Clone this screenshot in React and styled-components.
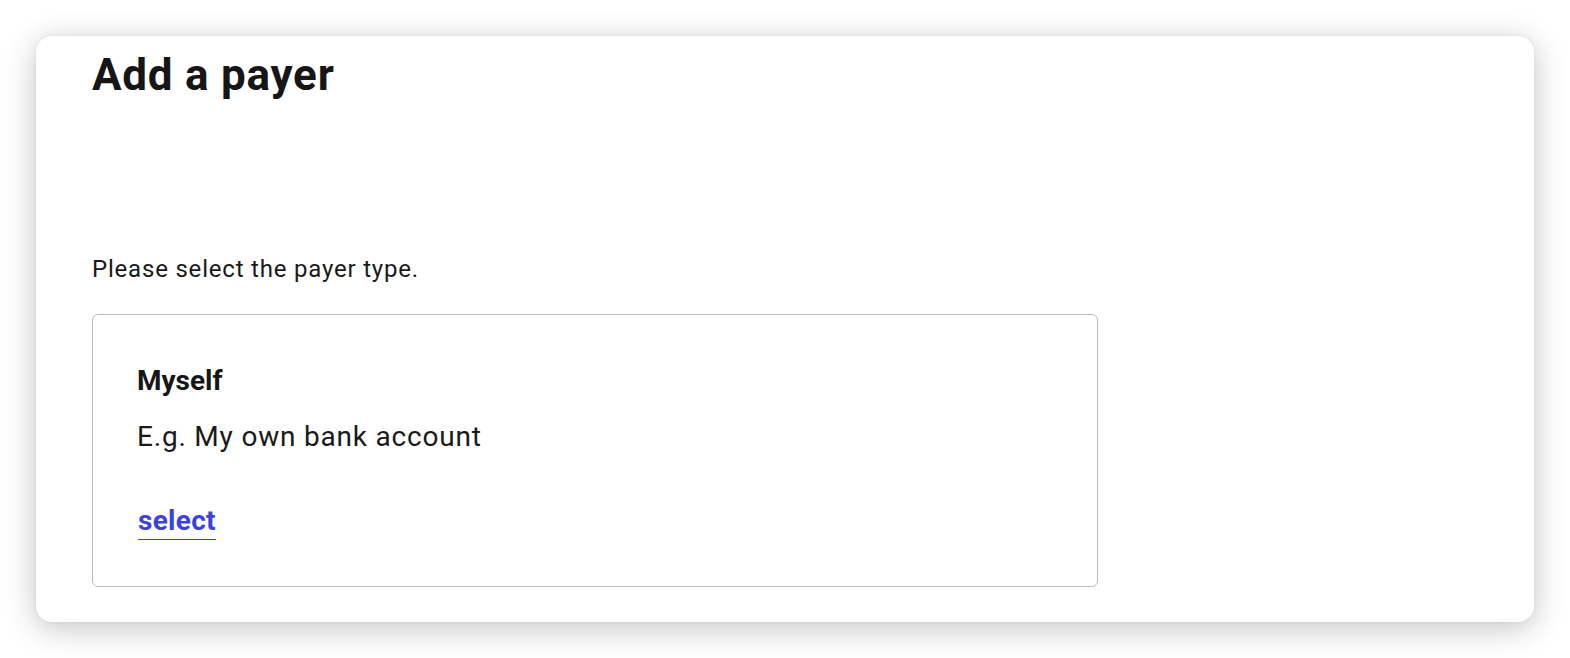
import styled, { createGlobalStyle } from "styled-components";

const GlobalStyle = createGlobalStyle`
  html, body {
    margin: 0;
    padding: 0;
    background: #ffffff;
  }
  body {
    font-family: Roboto, "Liberation Sans", sans-serif;
    color: #1a1a1a;
  }
`;

const Stage = styled.div`
  width: 1570px;
  height: 658px;
  padding: 36px 36px 36px 36px;
  box-sizing: border-box;
  background: #ffffff;
`;

const Window = styled.div`
  height: 100%;
  background: #ffffff;
  border-radius: 16px;
  box-shadow: 0 6px 32px rgba(0, 0, 0, 0.24), 0 0 4px rgba(0, 0, 0, 0.05);
  padding: 0 56px;
  box-sizing: border-box;
  overflow: hidden;
`;

const Title = styled.h1`
  margin: 13px 0 0;
  font-size: 44px;
  font-weight: 700;
  line-height: 52px;
  letter-spacing: 0.75px;
  color: #161616;
`;

const Lead = styled.p`
  margin: 154px 0 0;
  font-size: 24px;
  line-height: 28px;
  letter-spacing: 0.8px;
  color: #1a1a1a;
`;

const OptionCard = styled.div`
  width: 1006px;
  height: 273px;
  box-sizing: border-box;
  margin-top: 31px;
  border: 1px solid #bdbdbd;
  border-radius: 6px;
  padding: 50px 44px 0;
`;

const OptionName = styled.div`
  font-size: 28px;
  font-weight: 700;
  line-height: 32px;
  color: #161616;
`;

const OptionHint = styled.div`
  margin-top: 24px;
  font-size: 28px;
  line-height: 32px;
  letter-spacing: 0.8px;
  color: #1a1a1a;
`;

const LinkRow = styled.div`
  margin-top: 49px;
  padding-left: 1px;
`;

const SelectLink = styled.a`
  display: inline-block;
  font-size: 28px;
  font-weight: 700;
  line-height: 37px;
  letter-spacing: 0.3px;
  color: #3a43df;
  text-decoration: none;
  border-bottom: 1px solid #3a43df;
  cursor: pointer;
`;

export default function App() {
  return (
    <>
      <GlobalStyle />
      <Stage>
        <Window>
          <Title>Add a payer</Title>
          <Lead>Please select the payer type.</Lead>
          <OptionCard>
            <OptionName>Myself</OptionName>
            <OptionHint>E.g. My own bank account</OptionHint>
            <LinkRow>
              <SelectLink href="#">select</SelectLink>
            </LinkRow>
          </OptionCard>
        </Window>
      </Stage>
    </>
  );
}
